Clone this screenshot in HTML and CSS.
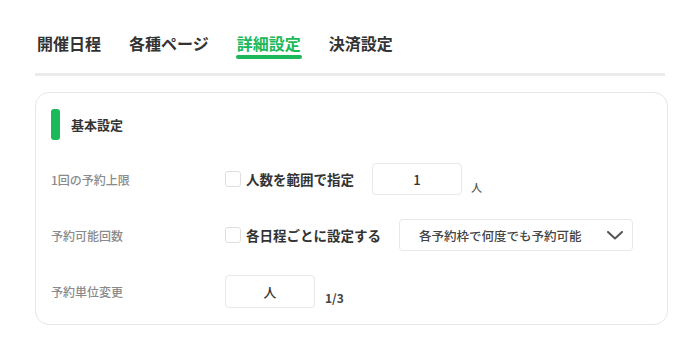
FILE: index.html
```html
<!DOCTYPE html>
<html lang="ja">
<head>
  <meta charset="UTF-8" />
  <meta name="viewport" content="width=device-width, initial-scale=1.0">
  <title>詳細設定</title>
  <link rel="stylesheet" href="styles.css">
</head>
<body>

  <div class="page">
    <nav class="tabs">
      <div class="tab">開催日程</div>
      <div class="tab">各種ページ</div>
      <div class="tab active">詳細設定</div>
      <div class="tab">決済設定</div>
    </nav>

    <div class="card">
      <div class="section-title">
        <span class="bar"></span>
        <span>基本設定</span>
      </div>

      <div class="row">
        <div class="label">1回の予約上限</div>
        <label class="check"><span class="box"></span>人数を範囲で指定</label>
        <div class="field">1</div>
        <span class="unit">人</span>
      </div>

      <div class="row">
        <div class="label">予約可能回数</div>
        <label class="check"><span class="box"></span>各日程ごとに設定する</label>
        <div class="select">
          <span>各予約枠で何度でも予約可能</span>
          <svg width="16" height="9" viewBox="0 0 16 9"><path d="M1 1 L8 7.5 L15 1" fill="none" stroke="#555" stroke-width="2" stroke-linecap="round" stroke-linejoin="round"/></svg>
        </div>
      </div>

      <div class="row">
        <div class="label">予約単位変更</div>
        <div class="field unit-field">人</div>
        <span class="count">1/3</span>
      </div>
    </div>
  </div>

</body>
</html>
```

FILE: styles.css
```css
* {
  margin: 0;
  padding: 0;
  box-sizing: border-box;
}

html, body {
  width: 100%;
  min-height: 100vh;
  background: #fff;
  font-family: "Noto Sans CJK JP", "Noto Sans", sans-serif;
  color: #333;
}

.page {
  padding: 32px 0 0 35px;
  width: 668px;
}

.tabs {
  display: flex;
  gap: 28px;
  padding-left: 2px;
  border-bottom: 3px solid #ebebeb;
  padding-bottom: 14px;
  margin-right: 3px;
}

.tab {
  font-size: 16px;
  font-weight: bold;
  line-height: 22px;
  color: #333;
  padding-bottom: 5px;
  position: relative;
}

.tab.active {
  color: #1bb95a;
}

.tab.active::after {
  content: "";
  position: absolute;
  left: -1px;
  right: -1px;
  bottom: 0;
  height: 4px;
  border-radius: 2px;
  background: #1bb95a;
}

.card {
  margin-top: 16px;
  border: 1px solid #e6e6e6;
  border-radius: 14px;
  padding: 16px 15px 17px;
  display: flex;
  flex-direction: column;
  gap: 24px;
}

.section-title {
  display: flex;
  align-items: center;
  gap: 11px;
  font-size: 13px;
  font-weight: bold;
  color: #333;
  margin-bottom: -1px;
}

.bar {
  width: 9px;
  height: 31px;
  border-radius: 3px;
  background: #1bb95a;
}

.row {
  display: flex;
  align-items: center;
  height: 32px;
}

.label {
  width: 174px;
  font-size: 12px;
  font-weight: 500;
  color: #8a8a8a;
}

.check {
  display: flex;
  align-items: center;
  gap: 5px;
  font-size: 13.5px;
  font-weight: bold;
  color: #333;
  margin-right: 18px;
}

.box {
  width: 16px;
  height: 16px;
  border: 1px solid #dedede;
  border-radius: 3px;
}

.field {
  width: 90px;
  height: 32px;
  border: 1px solid #e8e8e8;
  border-radius: 4px;
  display: flex;
  align-items: center;
  justify-content: center;
  font-size: 13px;
  font-weight: 500;
  color: #333;
}

.unit-field {
  height: 33px;
}

.unit {
  align-self: flex-end;
  font-size: 11px;
  font-weight: 500;
  color: #555;
  margin-left: 9px;
  line-height: 14px;
  margin-bottom: 1px;
}

.count {
  align-self: flex-end;
  font-size: 12px;
  font-weight: bold;
  color: #444;
  margin-left: 10px;
  line-height: 14px;
  margin-bottom: 2px;
}

.select {
  width: 234px;
  height: 32px;
  border: 1px solid #e8e8e8;
  border-radius: 4px;
  display: flex;
  align-items: center;
  justify-content: space-between;
  padding: 0 9px 0 19px;
  font-size: 12.5px;
  font-weight: 500;
  color: #444;
}
```
